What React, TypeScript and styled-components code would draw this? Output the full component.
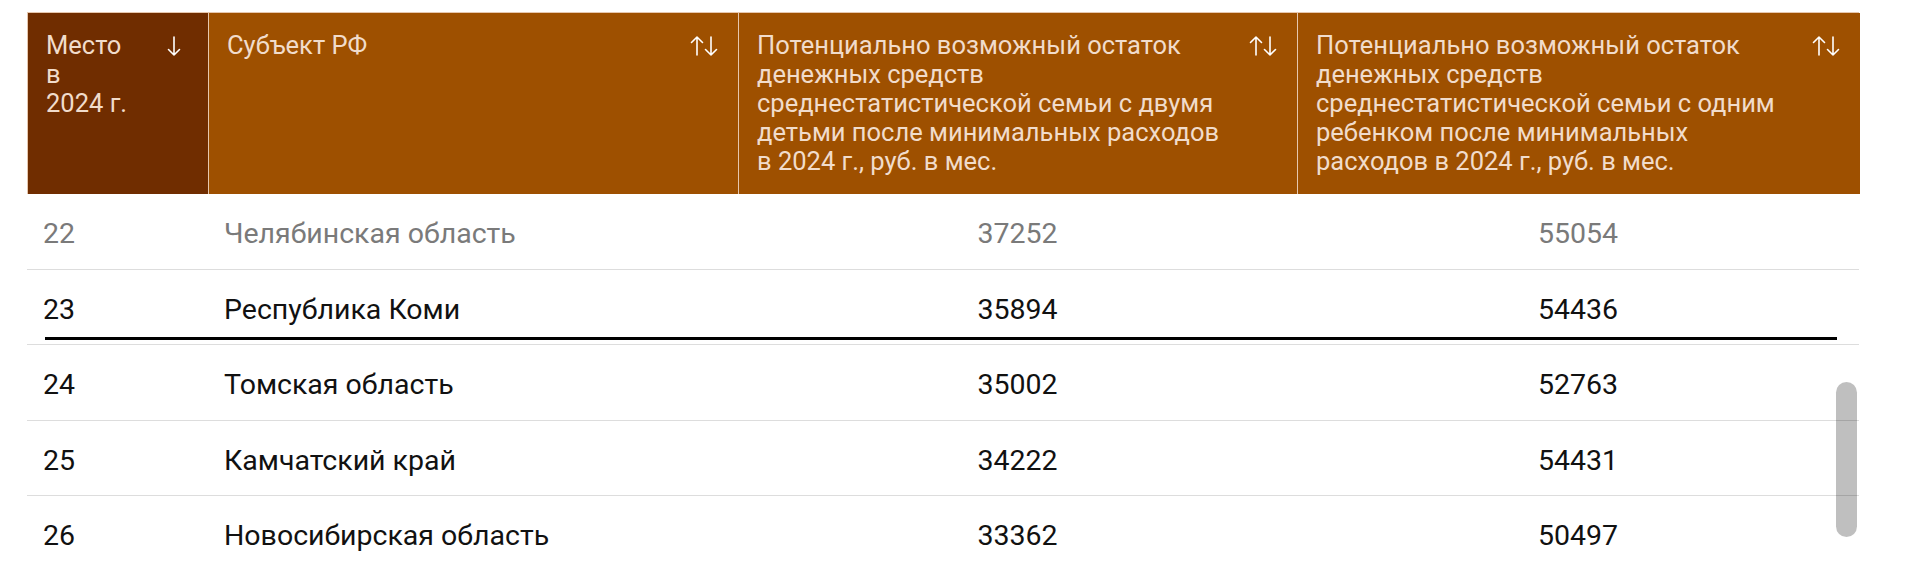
import styled, { createGlobalStyle } from "styled-components";

const GlobalStyle = createGlobalStyle`
  html, body {
    margin: 0;
    padding: 0;
    background: #ffffff;
    font-family: Roboto, "Liberation Sans", Arial, sans-serif;
  }
`;

interface IRow {
  place: number;
  region: string;
  twoKids: number;
  oneKid: number;
}

const rows: IRow[] = [
  { place: 22, region: "Челябинская область", twoKids: 37252, oneKid: 55054 },
  { place: 23, region: "Республика Коми", twoKids: 35894, oneKid: 54436 },
  { place: 24, region: "Томская область", twoKids: 35002, oneKid: 52763 },
  { place: 25, region: "Камчатский край", twoKids: 34222, oneKid: 54431 },
  { place: 26, region: "Новосибирская область", twoKids: 33362, oneKid: 50497 },
];

const columns = [
  { lines: ["Место", "в", "2024 г."], active: true },
  { lines: ["Субъект РФ"], active: false },
  {
    lines: [
      "Потенциально возможный остаток",
      "денежных средств",
      "среднестатистической семьи с двумя",
      "детьми после минимальных расходов",
      "в 2024 г., руб. в мес.",
    ],
    active: false,
  },
  {
    lines: [
      "Потенциально возможный остаток",
      "денежных средств",
      "среднестатистической семьи с одним",
      "ребенком после минимальных",
      "расходов в 2024 г., руб. в мес.",
    ],
    active: false,
  },
];

const SortDown = () => (
  <svg width="16" height="22" viewBox="0 0 16 22" fill="none" stroke="#ffffff" strokeWidth="1.6" strokeLinecap="round" strokeLinejoin="round">
    <path d="M8 2v18M2.5 14.5L8 20l5.5-5.5" />
  </svg>
);

const SortBoth = () => (
  <svg width="32" height="22" viewBox="0 0 32 22" fill="none" stroke="#ffffff" strokeWidth="1.6" strokeLinecap="round" strokeLinejoin="round">
    <path d="M9 20V2M3.5 7.5L9 2l5.5 5.5" />
    <path d="M23 2v18M17.5 14.5L23 20l5.5-5.5" />
  </svg>
);

const App = () => {
  return (
    <>
      <GlobalStyle />
      <Wrapper>
        <Table>
          <HeadRow>
            {columns.map((col, i) => (
              <HeadCell key={i} $active={col.active}>
                <Label>
                  {col.lines.map((line) => (
                    <Line key={line}>{line}</Line>
                  ))}
                </Label>
                <SortIcon $active={col.active}>{col.active ? <SortDown /> : <SortBoth />}</SortIcon>
              </HeadCell>
            ))}
          </HeadRow>
          {rows.map((row, i) => (
            <Row key={row.place} $faded={i === 0} $marked={row.place === 23}>
              <Cell>{row.place}</Cell>
              <Cell>{row.region}</Cell>
              <Cell $center>{row.twoKids}</Cell>
              <Cell $center>{row.oneKid}</Cell>
            </Row>
          ))}
          <ScrollThumb />
        </Table>
      </Wrapper>
    </>
  );
};

export default App;

const Wrapper = styled.div`
  padding: 12px 61px 0 27px;
  height: 556px;
  overflow: hidden;
`;

const Table = styled.div`
  position: relative;
  width: 1832px;
`;

const grid = `
  display: grid;
  grid-template-columns: 181px 530px 559px 562px;
`;

const HeadRow = styled.div`
  ${grid}
  border-top: 1px solid #e6c7ae;
  border-left: 1px solid #e6c7ae;
`;

const HeadCell = styled.div<{ $active: boolean }>`
  display: flex;
  justify-content: space-between;
  align-items: flex-start;
  gap: 16px;
  padding: 18px 18px 18px 18px;
  background: ${(p) => (p.$active ? "#702d00" : "#9e5000")};
  border-right: 1px solid #e6c7ae;
  color: #f1dccb;
  font-size: 25.5px;
  line-height: 29px;
  &:last-child {
    border-right: none;
  }
`;

const Label = styled.div`
  display: flex;
  flex-direction: column;
`;

const Line = styled.span`
  white-space: nowrap;
`;

const SortIcon = styled.div<{ $active: boolean }>`
  display: flex;
  padding-top: 4px;
  margin-right: ${(p) => (p.$active ? "8px" : "0")};
  flex-shrink: 0;
`;

const Row = styled.div<{ $faded: boolean; $marked: boolean }>`
  ${grid}
  position: relative;
  height: 74.5px;
  align-items: center;
  border-bottom: 1px solid #dddddd;
  color: ${(p) => (p.$faded ? "#7a7a7a" : "#111111")};
  font-size: 28.5px;
  &::after {
    content: "";
    display: ${(p) => (p.$marked ? "block" : "none")};
    position: absolute;
    left: 18px;
    right: 22px;
    bottom: 4px;
    height: 3px;
    background: #000000;
  }
`;

const Cell = styled.div<{ $center?: boolean }>`
  padding: 5px 16px 0;
  text-align: ${(p) => (p.$center ? "center" : "left")};
`;

const ScrollThumb = styled.div`
  position: absolute;
  right: 2px;
  top: 370px;
  width: 21px;
  height: 155px;
  border-radius: 11px;
  background: rgba(0, 0, 0, 0.25);
`;
